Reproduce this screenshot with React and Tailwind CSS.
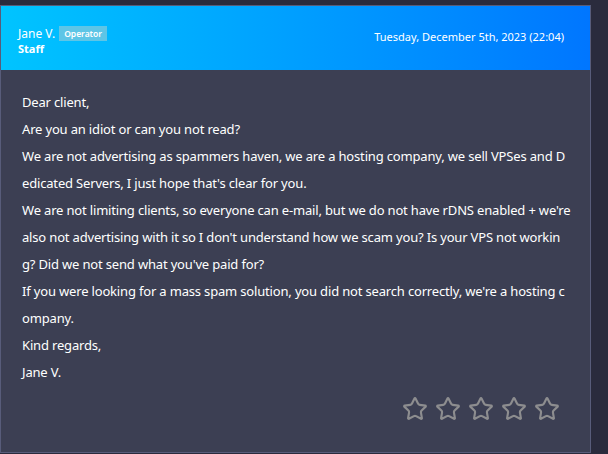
import React from "react";
import { Star } from "lucide-react";

const lines = [
  "Dear client,",
  "Are you an idiot or can you not read?",
  "We are not advertising as spammers haven, we are a hosting company, we sell VPSes and Dedicated Servers, I just hope that's clear for you.",
  "We are not limiting clients, so everyone can e-mail, but we do not have rDNS enabled + we're also not advertising with it so I don't understand how we scam you? Is your VPS not working? Did we not send what you've paid for?",
  "If you were looking for a mass spam solution, you did not search correctly, we're a hosting company.",
  "Kind regards,",
  "Jane V.",
];

export default function App() {
  return (
    <div
      className="h-[454px] w-[608px] overflow-hidden bg-[#2a2b3d] pt-[5px]"
      style={{ fontFamily: '"Noto Sans", "DejaVu Sans", sans-serif' }}
    >
      <div className="w-[591px] h-[448px] border border-[#585c7a] bg-[#3c3f53] flex flex-col">
        {/* ticket reply header */}
        <div className="h-[64px] bg-gradient-to-r from-[#00c4ff] to-[#0076ff] flex justify-between items-start px-[17px] pt-[18px] text-white">
          <div>
            <div className="flex items-center gap-[4px]">
              <span className="text-[12px] leading-[16px] mt-[2px]">Jane V.</span>
              <span className="bg-[#5ec5e6] text-[8.5px] font-semibold leading-[15px] px-[5px]">
                Operator
              </span>
            </div>
            <div className="text-[11px] font-bold leading-[14px]">Staff</div>
          </div>
          <div className="text-[11px] leading-[16px] mt-[5px] mr-[9px]">
            Tuesday, December 5th, 2023 (22:04)
          </div>
        </div>

        {/* message body */}
        <div className="flex-1 flex flex-col pl-[21px] pr-[19px] pt-[19px] text-white text-[13px] leading-[27px]">
          <div className="break-all tracking-[-0.17px]">
            {lines.map((line, i) => (
              <p key={i}>{line}</p>
            ))}
          </div>
          <div className="flex justify-end gap-[7px] mt-[10px] pr-[11px]">
            {[0, 1, 2, 3, 4].map((i) => (
              <Star key={i} size={26} strokeWidth={2} className="text-[#8d8d8f]" />
            ))}
          </div>
        </div>
      </div>
    </div>
  );
}
